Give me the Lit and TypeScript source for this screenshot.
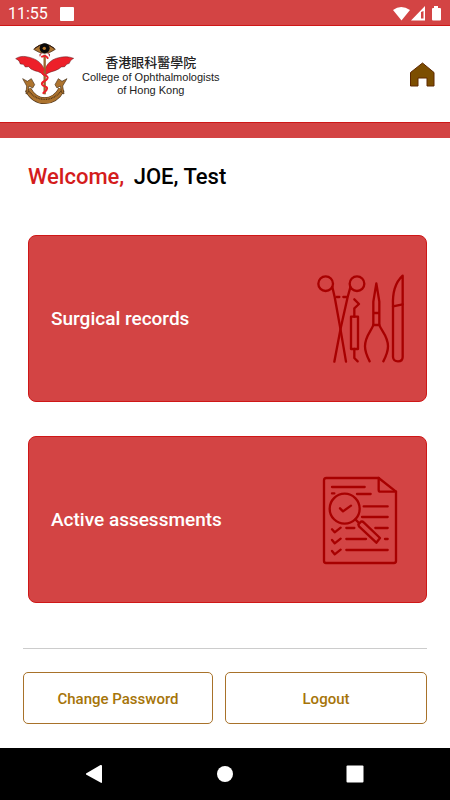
import { LitElement, html, css, svg } from "lit";
import { customElement } from "lit/decorators.js";

const surgicalTools = svg`
  <circle cx="49" cy="56" r="22"/>
  <circle cx="143" cy="56" r="22"/>
  <path d="M69 66 L76 96 L93 190 L110 290"/>
  <path d="M123 67 L115 96 L94 190 L75 290"/>
  <path d="M82 96 H90 M102 96 H111"/>
  <path d="M135 103 L149 117 L135 130 V155"/>
  <path d="M125 155 H146 V252 H125 Z"/>
  <path d="M135 252 V279 L145 289"/>
  <path d="M201 55 L192 110 V180 H210 V110 Z M192 144 H210"/>
  <path d="M192 180 C186 198 167 213 167 244 C167 262 174 276 181 289"/>
  <path d="M210 180 C216 198 236 213 236 244 C236 262 229 276 222 289"/>
  <path d="M280 32 C258 52 249 86 251 124 L280 118 Z"/>
  <path d="M251 124 V276 Q252 289 266 289 Q280 289 280 276 V118"/>
`;

const checklist = svg`
  <path d="M51 36 H208 L260 77 V285 Q260 291 254 291 H50 Q44 291 44 285 V43 Q44 36 51 36 Z"/>
  <path d="M208 36 V71 Q208 77 214 77 H260"/>
  <path d="M68 63 H166 M68 82 H75 M143 84 H184 M163 121 H235 M158 153 H235"/>
  <path d="M111 186 H135 M198 186 H235 M111 219 H170 M227 219 H235 M111 252 H235"/>
  <circle cx="106" cy="128" r="45"/>
  <path d="M92 127 L101 136 L125 119"/>
  <path d="M138 160 L149 171"/>
  <path d="M147 175 L155 167 Q159 165 163 169 L212 216 L201 230 L149 181 Z"/>
  <path d="M68 190 L76 199 L94 185 M68 222 L76 232 L94 218 M68 255 L76 265 L94 251"/>
`;

@customElement("menu-card")
class MenuCard extends LitElement {
  static properties = { label: {}, icon: {} };
  declare label: string;
  declare icon: unknown;

  static styles = css`
    :host { display: block; }
    .card {
      display: flex;
      align-items: center;
      justify-content: space-between;
      box-sizing: border-box;
      width: 100%;
      min-height: 167px;
      padding: 0 20px 0 22px;
      border: 1px solid #cf1717;
      border-radius: 8px;
      background: #d34444;
      color: #fff;
      font: 500 19px/24px Roboto, sans-serif;
      text-align: left;
      cursor: pointer;
    }
    .icon {
      width: 90px;
      height: 90px;
      flex: none;
      overflow: visible;
      fill: none;
      stroke: #a80000;
      stroke-width: 7;
      stroke-linecap: round;
      stroke-linejoin: round;
    }
  `;

  render() {
    return html`<button class="card" type="button">
      <span>${this.label}</span>
      <svg class="icon" viewBox="20 27 270 270" aria-hidden="true">${this.icon}</svg>
    </button>`;
  }
}

@customElement("app-root")
class AppRoot extends LitElement {
  static styles = css`
    :host {
      display: flex;
      flex-direction: column;
      min-height: 100vh;
      background: #fff;
      font-family: Roboto, sans-serif;
    }
    .status {
      display: flex;
      align-items: center;
      box-sizing: border-box;
      height: 26px;
      padding: 2px 8px 0;
      border-bottom: 1px solid #cf1717;
      background: #d34444;
      color: #fff;
      font-size: 16px;
      line-height: 24px;
    }
    .notice {
      width: 14px;
      height: 14px;
      margin-left: 12px;
      border-radius: 1px;
      background: #fff;
    }
    .signals {
      width: 50px;
      height: 16px;
      margin-left: auto;
      fill: #fff;
    }
    .header {
      display: flex;
      align-items: center;
      justify-content: space-between;
      height: 96px;
      padding: 0 15px;
    }
    .brand { display: flex; align-items: center; gap: 7px; }
    .crest { width: 60px; height: 62px; }
    .name {
      color: #222;
      font: 11px/13px "Liberation Sans", "Noto Sans CJK TC", sans-serif;
      text-align: center;
    }
    .chinese {
      display: block;
      font: 500 13px/19px "Noto Sans CJK TC", sans-serif;
    }
    .english { display: block; }
    .home { display: block; width: 25px; height: 25px; }
    .home svg { display: block; width: 25px; height: 25px; }
    .band {
      box-sizing: border-box;
      height: 16px;
      border-top: 1px solid #cf1717;
      background: #d34444;
    }
    .main { flex: 1; padding: 27px 23px 23px; }
    .welcome {
      margin: 0 5px 46px;
      color: #000;
      font-size: 22px;
      line-height: 24px;
      font-weight: 500;
    }
    .greeting { margin-right: 4px; color: #d41c1c; }
    .cards {
      display: flex;
      flex-direction: column;
      gap: 34px;
      margin-left: 5px;
    }
    .rule { height: 1px; margin: 45px 0 23px; border: 0; background: #ccc; }
    .actions {
      display: grid;
      grid-template-columns: 190fr 202fr;
      gap: 12px;
    }
    .action {
      height: 52px;
      padding-top: 2px;
      border: 1px solid #a8722a;
      border-radius: 5px;
      background: #fff;
      color: #a67408;
      font: 500 15px/20px Roboto, sans-serif;
      cursor: pointer;
    }
    .nav {
      display: flex;
      align-items: center;
      justify-content: center;
      gap: 106px;
      height: 52px;
      background: #000;
    }
    .key { padding: 0; border: 0; background: none; cursor: pointer; }
    .key svg { display: block; width: 24px; height: 24px; fill: #fff; }
  `;

  render() {
    return html`
      <div class="status">
        <span>11:55</span>
        <span class="notice"></span>
        <svg class="signals" viewBox="0 0 50 16" aria-hidden="true">
          <path d="M1 4 Q9 -2 18 4 L9.500 14.500 Z"/>
          <path fill-rule="evenodd" d="M33 0 V14.500 H19 Z M29 6 V12.500 H31.500 V5 Z"/>
          <path d="M42 0 H46 V2 H48 Q49 2 49 3 V13.500 Q49 14.500 48 14.500 H41 Q40 14.500 40 13.500 V3 Q40 2 41 2 H42 Z"/>
        </svg>
      </div>
      <header class="header">
        <div class="brand">
          <svg class="crest" viewBox="45 25 180 186" aria-hidden="true">
            <path fill="#ed2029" stroke="#551719" stroke-width="1.500" d="M47 72 C62 62 78 65 92 69 C108 74 121 81 131 99 L134 110 L137 99 C146 80 160 73 176 69 C191 65 206 65 221 71 C212 76 210 80 208 86 L200 89 L194 96 L184 97 L176 103 L165 108 C152 112 140 114 134 126 C126 114 116 111 104 108 L93 103 L86 96 L76 97 L70 89 L61 88 C58 78 55 76 47 72 Z"/>
            <path fill="#ad742f" stroke="#35200f" stroke-width="2" d="M101 44 Q133 12 166 44 Q134 68 101 44 Z"/>
            <path fill="none" stroke="#2b1710" stroke-width="3" d="M104 41 Q134 18 163 41"/>
            <circle cx="134" cy="41" r="15" fill="#090909"/>
            <circle cx="133" cy="41" r="5" fill="#b7792e"/>
            <path fill="none" stroke="#a7232a" stroke-width="3" d="M125 57 Q118 55 120 65 M143 57 Q151 55 148 65"/>
            <path stroke="#99662e" stroke-width="7" d="M134 60 V179"/>
            <path fill="none" stroke="#ed2029" stroke-width="6" stroke-linecap="round" d="M126 66 Q138 60 143 70 M131 104 C113 121 150 120 142 132 C137 141 123 140 126 149 C130 158 148 153 139 167 L130 175"/>
            <path fill="none" stroke="#493018" stroke-width="20" d="M84 164 Q102 198 134 198 Q166 198 185 164"/>
            <path fill="none" stroke="#ad742f" stroke-width="17" d="M84 164 Q102 198 134 198 Q166 198 185 164"/>
            <path fill="none" stroke="#55381a" stroke-width="4" stroke-dasharray="3 2" d="M86 169 Q105 194 134 194 Q164 194 183 169"/>
            <path fill="#ad742f" stroke="#493018" stroke-width="2" d="M68 132 L82 140 L94 132 L104 150 L98 160 L87 154 L84 174 L78 178 L80 154 Z M201 132 L186 140 L175 132 L165 150 L171 160 L181 154 L185 174 L192 178 L188 154 Z"/>
          </svg>
          <div class="name">
            <span class="chinese" lang="zh-Hant">香港眼科醫學院</span>
            <span class="english">College of Ophthalmologists<br>of Hong Kong</span>
          </div>
        </div>
        <a class="home" href="#" aria-label="Home">
          <svg viewBox="0 0 25 25"><path fill="#7c4e00" stroke="#5e2800" d="M12.500 1 L24 10.500 V24 H17 V16 H8 V24 H.500 V10.500 Z"/></svg>
        </a>
      </header>
      <div class="band"></div>
      <main class="main">
        <h1 class="welcome"><span class="greeting">Welcome,</span> JOE, Test</h1>
        <div class="cards">
          <menu-card label="Surgical records" .icon=${surgicalTools}></menu-card>
          <menu-card label="Active assessments" .icon=${checklist}></menu-card>
        </div>
        <hr class="rule">
        <div class="actions">
          <button class="action" type="button">Change Password</button>
          <button class="action" type="button">Logout</button>
        </div>
      </main>
      <nav class="nav" aria-label="System">
        <button class="key" aria-label="Back"><svg viewBox="0 0 24 24"><path d="M3 11.500 L17.500 3 Q19 2.500 19 4 V20 Q19 21.500 17.500 20.500 L3 12.500 Z"/></svg></button>
        <button class="key" aria-label="Home screen"><svg viewBox="0 0 24 24"><circle cx="12" cy="12" r="8"/></svg></button>
        <button class="key" aria-label="Recent apps"><svg viewBox="0 0 24 24"><rect x="3.500" y="3.500" width="17" height="17" rx="1"/></svg></button>
      </nav>
    `;
  }
}
